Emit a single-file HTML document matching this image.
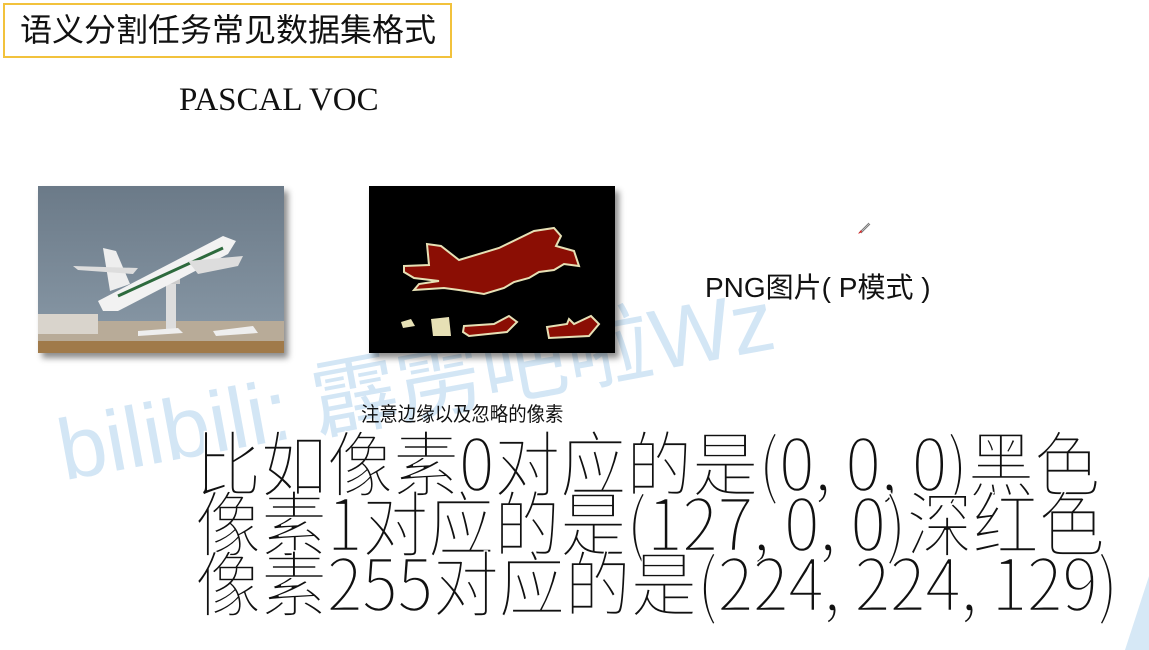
<!DOCTYPE html>
<html><head><meta charset="utf-8"><style>
html,body{margin:0;padding:0;}
body{width:1149px;height:631px;position:relative;overflow:hidden;background:#fff;font-family:"Liberation Sans","Noto Sans CJK SC",sans-serif;}
.abs{position:absolute;}
.title{left:3px;top:3px;width:445px;height:51px;border:2px solid #f2c23c;font-size:32px;line-height:51px;color:#111;}
.title span{position:absolute;left:15px;top:0;}
.wm{left:46px;top:382px;font-size:86px;color:#d3e6f5;transform:rotate(-10.5deg);transform-origin:left top;white-space:nowrap;}
.big{left:195px;font-family:"Noto Sans CJK SC",sans-serif;font-weight:300;font-size:66px;line-height:60px;color:#111;white-space:nowrap;transform-origin:left top;-webkit-text-stroke:1.3px #fff;}
</style></head><body>
<div class="abs wm">bilibili: 霹雳吧啦Wz</div>
<div class="abs" style="left:1138px;top:570px;width:40px;height:80px;background:#d6e8f6;transform:skewX(-18deg);"></div>
<div class="abs title"><span>语义分割任务常见数据集格式</span></div>
<div class="abs" style="left:179px;top:82px;font-family:'Liberation Serif',serif;font-size:33px;color:#111;">PASCAL VOC</div>

<div class="abs" style="left:38px;top:186px;width:246px;height:167px;box-shadow:4px 5px 6px rgba(0,0,0,.45);overflow:hidden;">
<svg width="246" height="167" viewBox="0 0 246 167">
<defs><linearGradient id="sky" x1="0" y1="0" x2="0" y2="1"><stop offset="0" stop-color="#6b7a88"/><stop offset="1" stop-color="#8a9aa8"/></linearGradient></defs>
<rect width="246" height="167" fill="url(#sky)"/>
<rect y="135" width="246" height="32" fill="#b8ab98"/>
<rect y="155" width="246" height="12" fill="#a07a4a"/>
<rect x="0" y="128" width="60" height="20" fill="#d9d4cc"/>
<rect x="128" y="95" width="10" height="50" fill="#ddd"/>
<rect x="124" y="90" width="18" height="8" fill="#ccc"/>
<path d="M100 145 L140 142 L145 147 L100 150Z" fill="#eee"/>
<path d="M175 145 L215 140 L220 147 L178 150Z" fill="#eee"/>
<path d="M60 115 L185 50 L198 55 L190 68 L80 125 L65 125Z" fill="#f2f2f2"/>
<path d="M65 62 L78 65 L92 98 L72 105Z" fill="#eee"/>
<path d="M80 110 L185 62" stroke="#2d6a3d" stroke-width="3"/>
<path d="M35 80 L100 82 L95 88 L40 84Z" fill="#ddd"/>
<path d="M150 75 L205 70 L200 80 L160 88Z" fill="#ddd"/>
</svg></div>

<div class="abs" style="left:369px;top:186px;width:246px;height:167px;background:#000;box-shadow:4px 5px 6px rgba(0,0,0,.45);overflow:hidden;">
<svg width="246" height="167" viewBox="0 0 246 167">
<g fill="#8b0e04" stroke="#e6e0b5" stroke-width="2">
<path d="M35 80 L60 79 L58 58 L72 60 L90 74 L130 62 L165 45 L185 42 L192 50 L187 60 L205 65 L210 80 L195 78 L185 84 L170 86 L160 92 L145 96 L135 102 L115 108 L90 104 L75 102 L45 104 L50 98 L70 95 L45 92 L35 86Z"/>
<path d="M95 140 L125 138 L140 130 L148 136 L138 146 L100 150 L94 146Z"/>
<path d="M178 141 L198 138 L200 133 L205 138 L222 130 L230 138 L220 150 L180 152Z"/>
</g>
<path d="M32 136 L42 133 L46 140 L34 142Z" fill="#e6e0b5"/>
<path d="M62 133 L80 131 L82 150 L64 150Z" fill="#e6e0b5"/>
</svg></div>

<svg class="abs" style="left:856px;top:220px" width="16" height="16" viewBox="0 0 16 16"><path d="M3 13 L13 3 M5 13 L14 4" stroke="#777" stroke-width="1"/><path d="M2 14 L5 10 L6 12Z" fill="#d22"/></svg>

<div class="abs" style="left:705px;top:266px;font-size:28px;color:#111;">PNG图片( P模式 )</div>

<div class="abs" style="left:361px;top:398px;font-size:20px;color:#111;font-family:'Noto Sans CJK SC',sans-serif;transform:scaleX(.92);transform-origin:left top;white-space:nowrap;">注意边缘以及忽略的像素</div>

<div class="abs big" style="top:428px;transform:scaleX(1.0) scaleY(1.08);">比如像素0对应的是(0, 0, 0)黑色</div>
<div class="abs big" style="top:488px;transform:scaleX(1.0) scaleY(1.08);">像素1对应的是(127, 0, 0)深红色</div>
<div class="abs big" style="top:548px;transform:scaleX(1.0) scaleY(1.08);">像素255对应的是(224, 224, 129)</div>
</body></html>
